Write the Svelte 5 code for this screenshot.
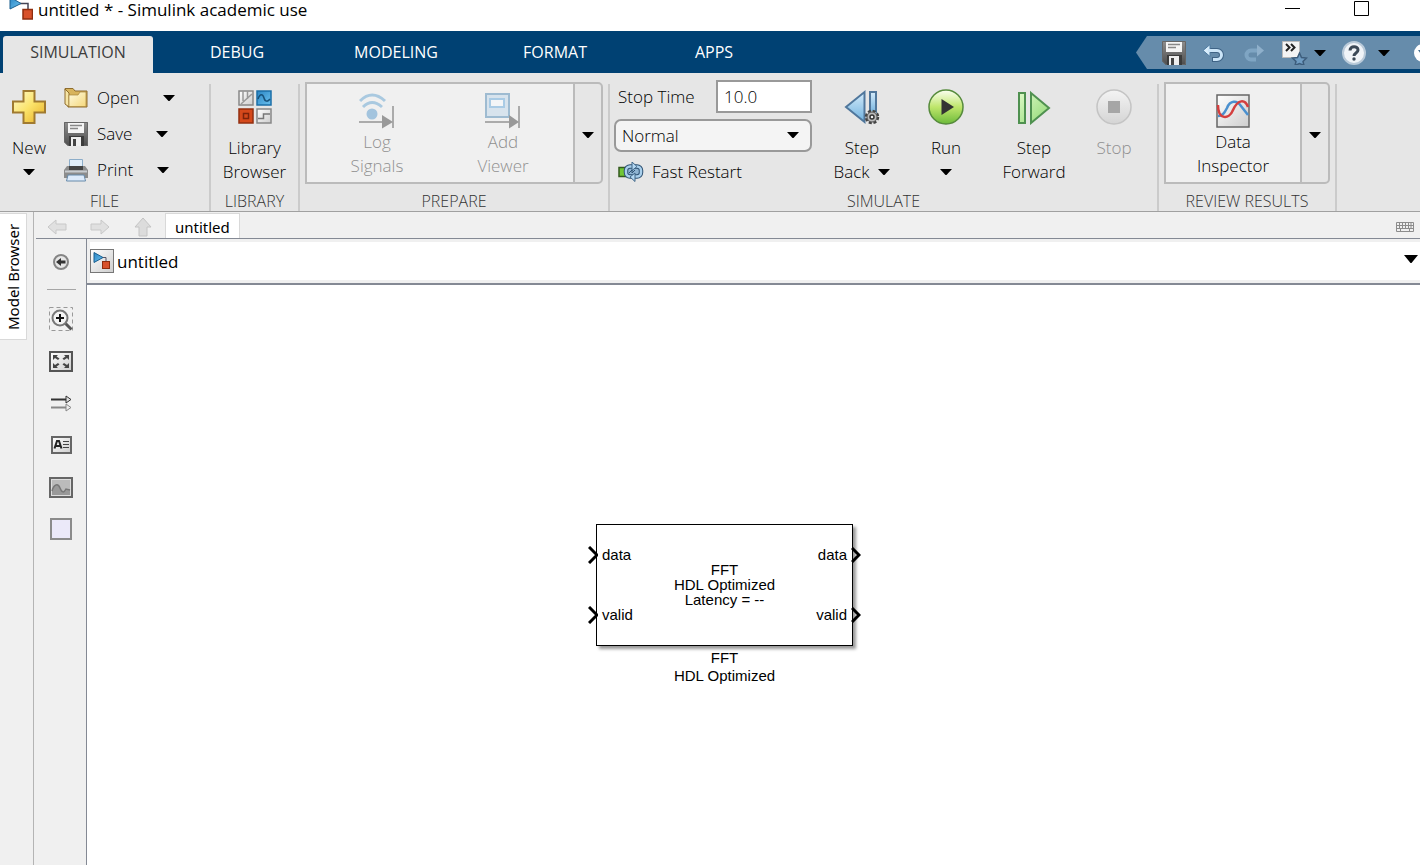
<script lang="ts">
	const tabs = ['SIMULATION', 'DEBUG', 'MODELING', 'FORMAT', 'APPS'];

	const fileActions = [
		{ id: 'open', label: 'Open' },
		{ id: 'save', label: 'Save' },
		{ id: 'print', label: 'Print' }
	];

	const paletteTools = [
		{ id: 'zoom', label: 'Zoom' },
		{ id: 'fit', label: 'Fit to View' },
		{ id: 'signals', label: 'Toggle Sample Time' },
		{ id: 'annotation', label: 'Annotation' },
		{ id: 'image', label: 'Image' },
		{ id: 'area', label: 'Area' }
	];

	const ports = ['data', 'valid'];

	let activeTab = $state('SIMULATION');
	let stopTime = $state('10.0');
	let simMode = $state('Normal');
</script>

{#snippet caret()}
	<svg class="caret" width="12" height="6" viewBox="0 0 12 6" aria-hidden="true">
		<path d="M0 0h12L6.5 6h-1z" fill="#000" />
	</svg>
{/snippet}

{#snippet floppy()}
	<svg width="24" height="24" viewBox="0 0 24 24" aria-hidden="true">
		<path d="M0 0h24v24H4l-4-4z" fill="url(#steel)" />
		<path d="M.5.5h23v23H4L.5 20z" fill="none" stroke="#666" />
		<rect x="4" y="1" width="16" height="10" fill="#f5f5f5" />
		<path d="M6 3.500h12M6 6.500h8" stroke="#888" stroke-width="1.500" />
		<path d="M5 14h15v10H5z" fill="#3b3b3b" />
		<path d="M7 15h10v9H7z" fill="#eee" />
		<path d="M9 17h3v7H9z" fill="#444" />
	</svg>
{/snippet}

{#snippet modelGlyph()}
	<path d="M11 7.500h8v6" fill="none" stroke="#445" stroke-width="1.500" />
	<path d="M1 1l11 6.500L1 13z" fill="url(#blue)" stroke="#1a5f8f" />
	<rect x="14" y="13.500" width="9.500" height="9.500" fill="#d8512a" stroke="#8e2d0e" stroke-width="1.500" />
{/snippet}

{#snippet fileIcon(id: string)}
	{#if id === 'open'}
		<svg width="24" height="24" viewBox="0 0 24 24" aria-hidden="true">
			<path d="M1 2.500h8l2 2.500h12v16H4z" fill="#d8b45c" stroke="#8f6d2e" />
			<path d="M1 3l4 4v14l-4-3z" fill="#f6e5a5" stroke="#8f6d2e" />
			<path d="M5 9h9l2-3h6v14.500H5z" fill="url(#folder)" stroke="#a8843a" stroke-width=".7" />
		</svg>
	{:else if id === 'save'}
		{@render floppy()}
	{:else}
		<svg width="24" height="24" viewBox="0 0 24 24" aria-hidden="true">
			<path d="M5.500 1.500h13v9h-13z" fill="#e1edf8" stroke="#8cadc9" />
			<path d="M3 8h18l3 4v8H0v-8z" fill="#8c8c8c" />
			<path d="M5 8h14v4H5z" fill="#444" />
			<path d="M1 13.500h22" stroke="#c8ccd0" stroke-width="2" />
			<path d="M4 17h16l1.500 6h-19z" fill="#dceafa" stroke="#678aaa" />
		</svg>
	{/if}
{/snippet}

{#snippet paletteIcon(id: string)}
	<svg width="24" height="24" viewBox="0 0 24 24" fill="none" aria-hidden="true">
		{#if id === 'zoom'}
			<rect x=".5" y=".5" width="23" height="23" stroke="#999" stroke-dasharray="4 3" />
			<path d="M16 16l6.500 6.500" stroke="#555" stroke-width="3" />
			<circle cx="11" cy="11" r="7.500" fill="#f3f3f3" stroke="#777" stroke-width="2" />
			<path d="M7 11h8M11 7v8" stroke="#111" stroke-width="2" />
		{:else if id === 'fit'}
			<rect x="1" y="3" width="22" height="19" fill="url(#pale)" stroke="#555" stroke-width="2" />
			<path d="M4 6h5L7.500 7.500l3 2-1.500 1.500-3-2L4 11zM20 6v5l-2-2-3 2-1.500-1.500 3-2L15 6zM4 19v-5l2 2 3-2 1.500 1.500-3 2L9 19zM20 19h-5l1.500-1.500-3-2L15 14l3 2 2-2z" fill="#444" />
		{:else if id === 'signals'}
			<path d="M2 8.500h16" stroke="#333" stroke-width="2" />
			<path d="M17 5l5 3.500-5 3.500z" fill="#ddd" stroke="#333" />
			<path d="M2 16.500h16" stroke="#888" stroke-width="2" />
			<path d="M17 13l5 3.500-5 3.500z" fill="#eee" stroke="#888" />
		{:else if id === 'annotation'}
			<rect x="3" y="4" width="19" height="16" fill="url(#pale)" stroke="#666" stroke-width="2" />
			<path d="M5.500 15.500L8 8h2l2.500 7.500M7 13h4" stroke="#222" stroke-width="2" />
			<path d="M14 8.500h6M14 11.500h6M14 14.500h6" stroke="#444" />
		{:else if id === 'image'}
			<rect x="1" y="3" width="22" height="19" fill="#ddd" stroke="#666" stroke-width="2" />
			<rect x="3" y="5" width="18" height="15" fill="#bbb" />
			<path d="M3 16c2-7 6-8 8-3 2 5 4 5 6 1l4 1v5H3z" fill="#999" />
			<path d="M3 16c2-7 6-8 8-3 2 5 4 5 6 1l4 1" stroke="#777" stroke-width="1.500" />
		{:else}
			<rect x="2" y="2" width="20" height="20" fill="#ebe9f9" stroke="#8b8b8b" stroke-width="2" />
		{/if}
	</svg>
{/snippet}

<!-- gradients shared by all icons -->
<svg class="defs" width="0" height="0" aria-hidden="true">
	<defs>
		<linearGradient id="steel" x1="0" y1="0" x2="0" y2="1">
			<stop offset="0" stop-color="#8f8f8f" />
			<stop offset="1" stop-color="#4d4d4d" />
		</linearGradient>
		<linearGradient id="gold" x1="0" y1="0" x2="1" y2="1">
			<stop offset="0" stop-color="#fffbd0" />
			<stop offset=".5" stop-color="#fbe36a" />
			<stop offset="1" stop-color="#e6ab22" />
		</linearGradient>
		<linearGradient id="folder" x1="0" y1="0" x2="1" y2="1">
			<stop offset="0" stop-color="#fffbe0" />
			<stop offset="1" stop-color="#f5d87c" />
		</linearGradient>
		<linearGradient id="blue" x1="0" y1="0" x2="1" y2="1">
			<stop offset="0" stop-color="#2b86c4" />
			<stop offset="1" stop-color="#6bc1ef" />
		</linearGradient>
		<linearGradient id="sky" x1="0" y1="0" x2="0" y2="1">
			<stop offset="0" stop-color="#d4ebfb" />
			<stop offset="1" stop-color="#6fb1de" />
		</linearGradient>
		<linearGradient id="lime" x1="0" y1="0" x2="0" y2="1">
			<stop offset="0" stop-color="#fbfff2" />
			<stop offset=".5" stop-color="#bfe66b" />
			<stop offset="1" stop-color="#6cba3a" />
		</linearGradient>
		<linearGradient id="mint" x1="0" y1="0" x2="1" y2="1">
			<stop offset="0" stop-color="#dcf9c6" />
			<stop offset="1" stop-color="#8fd873" />
		</linearGradient>
		<linearGradient id="pale" x1="0" y1="0" x2="1" y2="1">
			<stop offset="0" stop-color="#fff" />
			<stop offset="1" stop-color="#cdcdcd" />
		</linearGradient>
		<linearGradient id="silver" x1="0" y1="0" x2="0" y2="1">
			<stop offset="0" stop-color="#f4f4f4" />
			<stop offset="1" stop-color="#d4d4d4" />
		</linearGradient>
	</defs>
</svg>

<div class="window">
	<header class="titlebar">
		<svg class="app-icon" width="24" height="24" viewBox="0 0 24 24" aria-hidden="true">
			{@render modelGlyph()}
		</svg>
		<span class="title">untitled * - Simulink academic use</span>
		<div class="window-buttons">
			<button aria-label="Minimize">
				<svg width="16" height="16" viewBox="0 0 16 16"><path d="M0 8.500h15" stroke="#000" /></svg>
			</button>
			<button aria-label="Maximize">
				<svg width="16" height="16" viewBox="0 0 16 16"><path d="M.5 1.500h14v14H.500z" fill="none" stroke="#000" /></svg>
			</button>
		</div>
	</header>

	<nav class="tabbar">
		<div class="tabs" role="tablist">
			{#each tabs as tab}
				<button
					class="tab"
					class:active={tab === activeTab}
					role="tab"
					aria-selected={tab === activeTab}
					onclick={() => (activeTab = tab)}>{tab}</button
				>
			{/each}
		</div>
		<div class="quick-access">
			<button aria-label="Save">{@render floppy()}</button>
			<button aria-label="Undo">
				<svg width="24" height="24" viewBox="0 0 24 24" fill="none">
					<path d="M7 9.500h8a4.500 4.500 0 0 1 0 9H10" stroke="#3f6385" stroke-width="5" />
					<path d="M1 9.500l7-6v12z" fill="#d8edfb" stroke="#4f7ba0" />
					<path d="M6 9.500h9a4.500 4.500 0 0 1 0 9H11" stroke="#cbe5f8" stroke-width="3" />
				</svg>
			</button>
			<button aria-label="Redo" disabled>
				<svg width="24" height="24" viewBox="0 0 24 24" fill="none">
					<path d="M16 9.500H9a4.500 4.500 0 0 0 0 9h5" stroke="#7fa5c3" stroke-width="4" />
					<path d="M22 9.500l-7-6v12z" fill="#8fb0cb" />
				</svg>
			</button>
			<button class="qa-menu" aria-label="Favorites">
				<svg width="26" height="24" viewBox="0 0 26 24" fill="none">
					<path d="M.5.500h17v16H.500z" fill="#f4f4f4" stroke="#bbb" />
					<path d="M4 3l3.500 3.500L4 10M9 3l3.500 3.500L9 10" stroke="#222" stroke-width="2" />
					<path d="M17.500 12l2 4.500 5 .5-3.500 3.500 1 4-4.500-2-4.500 2 1-4-3.500-3.500 5-.5z" fill="#6f9cc2" stroke="#3d5d7c" stroke-width="1.500" />
				</svg>
				{@render caret()}
			</button>
			<button class="qa-menu help" aria-label="Help">
				<svg width="24" height="24" viewBox="0 0 24 24" fill="none">
					<circle cx="12" cy="12" r="11" fill="#f0f4f8" stroke="#b9cad9" stroke-width="2" />
					<path d="M8 9.500c0-5 8-5 8-.5 0 3-4 3-4 6" stroke="#3c4957" stroke-width="3" />
					<circle cx="12" cy="18" r="1.700" fill="#3c4957" />
				</svg>
				{@render caret()}
			</button>
			<button class="qa-more" aria-label="More">
				<svg width="18" height="18" viewBox="0 0 18 18">
					<circle cx="9" cy="9" r="9" fill="#fff" />
					<path d="M4 6h10l-5 7z" fill="#47708f" />
				</svg>
			</button>
		</div>
	</nav>

	<section class="ribbon">
		<div class="group file">
			<div class="group-body">
				<button class="big">
					<span class="big-icon">
						<svg width="34" height="34" viewBox="0 0 34 34">
							<path d="M11.500 1h11v10.500H33v11H22.500V33h-11V22.500H1v-11h10.500z" fill="url(#gold)" stroke="#a07a30" stroke-width="2" />
						</svg>
					</span>
					<span>New</span>
					<span>{@render caret()}</span>
				</button>
				<div class="file-list">
					{#each fileActions as action}
						<button class="row">
							{@render fileIcon(action.id)}
							<span class="row-label">{action.label}</span>
							{@render caret()}
						</button>
					{/each}
				</div>
			</div>
			<h2>FILE</h2>
		</div>

		<div class="group library">
			<div class="group-body">
				<button class="big">
					<span class="big-icon">
						<svg width="34" height="34" viewBox="0 0 34 34" fill="none">
							<rect x="1" y="1" width="14" height="14" fill="url(#pale)" stroke="#888" stroke-width="1.500" />
							<path d="M5 1v10M9.500 1v8M3 14L14 4" stroke="#999" stroke-width="1.500" />
							<rect x="19" y="1" width="14" height="14" fill="url(#blue)" stroke="#1b6fa8" stroke-width="1.500" />
							<path d="M20 9c2-6 5-5 6-1s4 4 6 1" stroke="#17527b" stroke-width="1.500" />
							<rect x="1" y="19" width="14" height="14" fill="#d5491b" stroke="#922f10" stroke-width="1.500" />
							<rect x="5.500" y="23.500" width="5" height="5" stroke="#7c230a" stroke-width="1.500" />
							<rect x="19" y="19" width="14" height="14" fill="url(#pale)" stroke="#888" stroke-width="1.500" />
							<path d="M20 28.500h5.500V24H32" stroke="#777" stroke-width="1.500" />
						</svg>
					</span>
					<span>Library<br />Browser</span>
				</button>
			</div>
			<h2>LIBRARY</h2>
		</div>

		<div class="group prepare">
			<div class="group-body">
				<div class="gallery">
					<div class="gallery-items">
						<button class="big" disabled>
							<span class="big-icon">
								<svg width="36" height="36" viewBox="0 0 36 36" fill="none">
									<path d="M1 8q12-12 25 0M4 14q9-9 19 0" stroke="#a9c9e0" stroke-width="3" />
									<circle cx="13" cy="21" r="5.500" fill="#a3c4de" />
									<path d="M0 29h25M34 13v22" stroke="#ababab" stroke-width="2" />
									<path d="M23 22l11 7-11 6.500z" fill="#999" />
								</svg>
							</span>
							<span>Log<br />Signals</span>
						</button>
						<button class="big" disabled>
							<span class="big-icon">
								<svg width="36" height="36" viewBox="0 0 36 36" fill="none">
									<rect x="1" y="1" width="23" height="23" fill="#d7e3ed" stroke="#9ebbd1" stroke-width="2" />
									<rect x="5" y="6" width="14" height="8" fill="#f3f5f7" stroke="#a9cbe5" stroke-width="2" />
									<path d="M0 29h25M34 13v22" stroke="#ababab" stroke-width="2" />
									<path d="M24 22l10 7-10 6.500z" fill="#999" />
								</svg>
							</span>
							<span>Add<br />Viewer</span>
						</button>
					</div>
					<button class="gallery-more" aria-label="More prepare tools">{@render caret()}</button>
				</div>
			</div>
			<h2>PREPARE</h2>
		</div>

		<div class="group simulate">
			<div class="group-body">
				<div class="sim-settings">
					<div class="stop-time">
						<label for="stop-time">Stop Time</label>
						<input id="stop-time" type="text" bind:value={stopTime} />
					</div>
					<div class="mode">
						<select aria-label="Simulation mode" bind:value={simMode}>
							<option>Normal</option>
							<option>Accelerator</option>
							<option>Rapid Accelerator</option>
						</select>
						{@render caret()}
					</div>
					<button class="fast-restart">
						<svg width="26" height="20" viewBox="0 0 26 20" fill="none">
							<path d="M1 5.500h8v9H1z" fill="#72c735" stroke="#33591f" stroke-width="1.500" />
							<rect x="8" y="4.500" width="15" height="10" rx="4" fill="#8fb4d2" stroke="#2f5273" stroke-width="4.500" />
							<rect x="8" y="4.500" width="15" height="10" rx="4" stroke="#a9cfeb" stroke-width="2.500" />
							<path d="M14 0l5 4.500-5 4zM17 11l-5 4 5 4.500z" fill="#b4d8f2" stroke="#416788" />
							<path d="M11 11l3-3v3l3-3" stroke="#2f5273" />
						</svg>
						Fast Restart
					</button>
				</div>
				<div class="run-tools">
					<button class="big">
						<span class="big-icon">
							<svg width="36" height="36" viewBox="0 0 36 36">
								<path d="M20.500 3v30L2 18z" fill="url(#sky)" stroke="#50779c" stroke-width="2" />
								<path d="M26 3h6v22h-6z" fill="url(#sky)" stroke="#50779c" stroke-width="2" />
								<circle cx="28" cy="28" r="6" fill="#ccc" stroke="#444" stroke-width="2.500" stroke-dasharray="3 1.700" />
								<circle cx="28" cy="28" r="5" fill="#bbb" stroke="#555" />
								<circle cx="28" cy="28" r="2" fill="#eee" stroke="#333" stroke-width="1.500" />
							</svg>
						</span>
						<span>Step<br />Back&nbsp;&nbsp;{@render caret()}</span>
					</button>
					<button class="big">
						<span class="big-icon">
							<svg width="36" height="36" viewBox="0 0 36 36">
								<circle cx="18" cy="18" r="17" fill="url(#lime)" stroke="#568b3c" stroke-width="1.500" />
								<path d="M13.500 10L26 18l-12.500 8z" fill="#333" />
							</svg>
						</span>
						<span>Run</span>
						<span>{@render caret()}</span>
					</button>
					<button class="big wide">
						<span class="big-icon">
							<svg width="36" height="36" viewBox="0 0 36 36">
								<path d="M3 4h6v30H3zM15 4l18 15-18 15z" fill="url(#mint)" stroke="#4f9150" stroke-width="2" />
							</svg>
						</span>
						<span>Step<br />Forward</span>
					</button>
					<button class="big narrow" disabled>
						<span class="big-icon">
							<svg width="36" height="36" viewBox="0 0 36 36">
								<circle cx="18" cy="18" r="17" fill="url(#silver)" stroke="#c4c4c4" stroke-width="1.500" />
								<path d="M12 12h12v12H12z" fill="#a6a6a6" />
							</svg>
						</span>
						<span>Stop</span>
					</button>
				</div>
			</div>
			<h2>SIMULATE</h2>
		</div>

		<div class="group review">
			<div class="group-body">
				<div class="gallery">
					<div class="gallery-items">
						<button class="big">
							<span class="big-icon">
								<svg width="34" height="34" viewBox="0 0 34 34" fill="none">
									<rect x="1" y="1" width="32" height="32" fill="url(#pale)" stroke="#666" stroke-width="1.500" />
									<path d="M2 22c4 0 6-2 9-8 3-8 10-8 14-2l7 9" stroke="#4a90cf" stroke-width="2.500" />
									<path d="M2 11c0 15 11 15 15 5 5-11 12-11 15-3" stroke="#d43f3f" stroke-width="2.500" />
								</svg>
							</span>
							<span>Data<br />Inspector</span>
						</button>
					</div>
					<button class="gallery-more" aria-label="More review tools">{@render caret()}</button>
				</div>
			</div>
			<h2>REVIEW RESULTS</h2>
		</div>
	</section>

	<div class="workspace">
		<aside class="dock">
			<button class="dock-tab">Model Browser</button>
		</aside>

		<div class="editor">
			<div class="docbar">
				<div class="history">
					<button aria-label="Back" disabled>
						<svg width="20" height="20" viewBox="0 0 20 20"><path d="M1 10l8-7v4h10v6H9v4z" fill="#e0e0e0" stroke="#c8c8c8" /></svg>
					</button>
					<button aria-label="Forward" disabled>
						<svg width="20" height="20" viewBox="0 0 20 20"><path d="M19 10l-8-7v4H1v6h10v4z" fill="#e0e0e0" stroke="#c8c8c8" /></svg>
					</button>
					<button aria-label="Up to parent" disabled>
						<svg width="20" height="20" viewBox="0 0 20 20"><path d="M10 1l8 9h-4v9H6v-9H2z" fill="#dcdcdc" stroke="#c4c4c4" /></svg>
					</button>
				</div>
				<button class="doc-tab">untitled</button>
				<button class="keyboard" aria-label="Keyboard shortcuts">
					<svg width="18" height="10" viewBox="0 0 18 10" fill="none">
						<path d="M.5.500h17v9H.500zM1 3.500h16M1 6.500h16M3.500 1v5M6.500 1v5M9.500 1v5M12.500 1v5M15 1v5M4.500 7v2M13.500 7v2" stroke="#8c8c8c" />
					</svg>
				</button>
			</div>

			<div class="editor-body">
				<div class="palette">
					<button aria-label="Hide browser">
						<svg width="16" height="16" viewBox="0 0 16 16">
							<circle cx="8" cy="8" r="7" fill="#e6e6e6" stroke="#858585" stroke-width="2" />
							<path d="M3 8l5-4v2.500h4.500v3H8V12z" fill="#333" />
						</svg>
					</button>
					<hr />
					{#each paletteTools as tool}
						<button aria-label={tool.label}>{@render paletteIcon(tool.id)}</button>
					{/each}
				</div>

				<div class="main">
					<div class="address">
						<svg width="24" height="24" viewBox="0 0 24 24" aria-hidden="true">
							<rect x=".5" y=".5" width="23" height="23" fill="url(#pale)" stroke="#777" />
							<path d="M12 8.500h4v4" fill="none" stroke="#556" />
							<path d="M4 3.500l9 5-9 5z" fill="url(#blue)" stroke="#1a5f8f" />
							<rect x="12.500" y="12.500" width="7" height="7" fill="#d8512a" stroke="#8e2d0e" />
						</svg>
						<span class="path">untitled</span>
						<button aria-label="Path history">
							<svg width="14" height="8" viewBox="0 0 14 8"><path d="M0 0h14L7.500 8h-1z" fill="#000" /></svg>
						</button>
					</div>

					<div class="canvas">
						<figure class="block">
							<div class="block-box">
								{#each ports as port}
									<div class="port-row">
										<span class="port">
											<svg width="10" height="18" viewBox="0 0 10 18"><path d="M1 1l8 8-8 8" fill="none" stroke="#000" stroke-width="3" /></svg>
											{port}
										</span>
										<span class="port">
											{port}
											<svg width="10" height="18" viewBox="0 0 10 18"><path d="M1 2l7 7-7 7" fill="none" stroke="#000" stroke-width="3" /></svg>
										</span>
									</div>
								{/each}
								<div class="block-text">FFT<br />HDL Optimized<br />Latency = --</div>
							</div>
							<figcaption>FFT<br />HDL Optimized</figcaption>
						</figure>
					</div>
				</div>
			</div>
		</div>
	</div>
</div>

<style>
	:global(body) {
		background: #fff;
	}

	.window {
		display: flex;
		flex-direction: column;
		min-height: 100vh;
		overflow: hidden;
		font-family: 'Open Sans', 'Noto Sans', sans-serif;
		font-size: 17px;
		line-height: 24px;
		color: #000;
	}

	.defs {
		position: absolute;
	}

	svg {
		flex: none;
	}

	button {
		display: flex;
		align-items: center;
		padding: 0;
		border: 0;
		background: none;
		font: inherit;
		color: inherit;
	}

	/* Title bar */
	.titlebar {
		display: flex;
		height: 31px;
		padding: 0 50px 0 9px;
	}

	.app-icon {
		margin: -4px 5px 0 0;
	}

	.title {
		line-height: 20px;
	}

	.window-buttons {
		display: flex;
		align-items: flex-start;
		gap: 53px;
		margin-left: auto;
	}

	/* Tab bar */
	.tabbar {
		display: flex;
		justify-content: space-between;
		height: 42px;
		background: #004173;
	}

	.tabs {
		display: flex;
		padding: 5px 0 0 3px;
		gap: 9px;
	}

	.tab {
		justify-content: center;
		width: 150px;
		padding-bottom: 6px;
		border-radius: 3px 3px 0 0;
		font-size: 16px;
		color: #fff;
	}

	.tab.active {
		background: #e6e6e6;
		color: #3c3c3c;
	}

	.quick-access {
		display: flex;
		align-items: center;
		gap: 16px;
		height: 33px;
		margin-top: 5px;
		padding-left: 26px;
		overflow: hidden;
		background: #668cab;
		clip-path: polygon(0 50%, 11px 0, 100% 0, 100% 100%, 11px 100%);
	}

	.qa-menu {
		gap: 6px;
	}

	.qa-menu.help {
		gap: 12px;
	}

	.qa-more {
		margin: 0 -12px 0 8px;
	}

	/* Ribbon */
	.ribbon {
		display: flex;
		height: 138px;
		background: #e6e6e6;
		border-bottom: 1px solid #a0a0a0;
		font-weight: 300;
	}

	.group {
		display: flex;
		flex-direction: column;
		justify-content: space-between;
		box-sizing: border-box;
		border-right: 2px solid #cbcbcb;
		border-image: linear-gradient(transparent 12px, #cbcbcb 12px) 1;
	}

	.group-body {
		display: flex;
		padding: 9px 5px 0;
	}

	h2 {
		margin: 0;
		font-size: 16px;
		font-weight: 300;
		line-height: 20px;
		text-align: center;
		color: #333;
	}

	.file {
		width: 211px;
	}

	.library {
		width: 89px;
	}

	.prepare {
		width: 310px;
	}

	.simulate {
		width: 549px;
	}

	.review {
		width: 178px;
	}

	.big {
		flex-direction: column;
		padding-top: 6px;
		text-align: center;
	}

	.big-icon {
		display: flex;
		align-items: center;
		height: 38px;
		margin-bottom: 10px;
	}

	.big .caret {
		vertical-align: 3px;
	}

	button:disabled {
		color: #909090;
	}

	.file .big {
		width: 48px;
	}

	.file-list {
		display: flex;
		flex-direction: column;
		margin-top: -2px;
		padding-left: 11px;
	}

	.row {
		height: 36px;
	}

	.row-label {
		padding: 0 24px 0 9px;
	}

	.library .big {
		width: 100%;
	}

	.gallery {
		display: flex;
		flex: 1;
		height: 98px;
		border: 2px solid #bbb;
		border-radius: 0 5px 5px 0;
	}

	.gallery-items {
		display: flex;
		flex: 1;
		justify-content: center;
		background: #f0f0f0;
	}

	.gallery .big {
		width: 126px;
		padding-top: 8px;
	}

	.gallery .big-icon {
		margin-bottom: 0;
	}

	.gallery-more {
		justify-content: center;
		width: 28px;
		padding-top: 3px;
		border-left: 2px solid #bbb;
	}

	.simulate .group-body {
		padding-left: 4px;
	}

	.sim-settings {
		display: flex;
		flex-direction: column;
		width: 198px;
		gap: 6px;
		margin-top: -2px;
	}

	.stop-time {
		display: flex;
		align-items: center;
		justify-content: space-between;
		padding-left: 4px;
	}

	input,
	select {
		box-sizing: border-box;
		height: 33px;
		border: 2px solid #999;
		font: inherit;
		color: #000;
	}

	input {
		width: 96px;
		padding: 0 6px;
		background: #fff;
	}

	.mode {
		position: relative;
		display: flex;
	}

	select {
		width: 100%;
		padding: 0 6px;
		appearance: none;
		border-radius: 7px;
		background: #f4f4f4;
	}

	.mode .caret {
		position: absolute;
		right: 13px;
		top: 13px;
		pointer-events: none;
	}

	.fast-restart {
		gap: 8px;
		height: 28px;
		padding-left: 4px;
	}

	.run-tools {
		display: flex;
		gap: 12px;
		padding-left: 14px;
	}

	.run-tools .big {
		width: 72px;
	}

	.run-tools .wide {
		width: 80px;
	}

	.run-tools .narrow {
		width: 56px;
	}

	/* Workspace */
	.workspace {
		display: flex;
		flex: 1;
		background: #f0f0f0;
	}

	.dock {
		width: 33px;
		border-right: 1px solid #b4b4b4;
	}

	.dock-tab {
		width: 27px;
		height: 127px;
		margin-top: 1px;
		justify-content: center;
		border: 1px solid #d9d9d9;
		border-width: 1px 0 1px 1px;
		background: #fff;
		font-family: 'Noto Sans', sans-serif;
		font-size: 15px;
		writing-mode: vertical-rl;
		transform: rotate(180deg);
	}

	.editor {
		display: flex;
		flex: 1;
		flex-direction: column;
		min-width: 0;
	}

	.docbar {
		display: flex;
		align-items: center;
		height: 26px;
		margin-left: 2px;
		border-bottom: 1px solid #848994;
	}

	.history {
		display: flex;
		gap: 23px;
		padding: 4px 12px 0 11px;
	}

	.doc-tab {
		align-self: flex-end;
		height: 25px;
		padding: 2px 9px 0;
		border: 1px solid #d9d9d9;
		border-bottom: 0;
		background: #fff;
		font-family: 'Noto Sans', sans-serif;
		font-size: 15px;
	}

	.keyboard {
		margin: 3px 6px 0 auto;
	}

	.editor-body {
		display: flex;
		flex: 1;
	}

	.palette {
		display: flex;
		flex-direction: column;
		align-items: center;
		gap: 18px;
		width: 53px;
		border-right: 1px solid #848994;
		box-sizing: border-box;
		padding: 15px 0 0 2px;
	}

	.palette hr {
		width: 29px;
		margin: 1px 0 -1px;
		border: 0;
		border-top: 1px solid #a6a6a6;
	}

	.main {
		display: flex;
		flex: 1;
		flex-direction: column;
		background: #fff;
	}

	.address {
		display: flex;
		align-items: center;
		height: 38px;
		padding-right: 2px;
		border: 3px solid #f0f0f0;
		border-right: 0;
	}

	.path {
		padding: 1px 0 0 3px;
	}

	.address button {
		margin: 0 0 5px auto;
	}

	.canvas {
		position: relative;
		flex: 1;
		border-top: 2px solid #848994;
	}

	.block {
		position: absolute;
		left: 509px;
		top: 239px;
		width: 257px;
		margin: 0;
		font-family: 'Liberation Sans', Arial, sans-serif;
		font-size: 15px;
		text-align: center;
	}

	.block-box {
		position: relative;
		display: flex;
		flex-direction: column;
		box-sizing: border-box;
		height: 122px;
		border: 1px solid #000;
		box-shadow: 3px 3px 3px #999;
		background: #fff;
	}

	.port-row {
		display: flex;
		flex: 1;
		align-items: center;
		justify-content: space-between;
		margin: 0 -9px;
	}

	.port {
		display: flex;
		align-items: center;
		gap: 4px;
	}

	.block-text {
		position: absolute;
		inset: 0;
		padding-top: 37px;
		line-height: 15px;
	}

	figcaption {
		padding-top: 3px;
		line-height: 18px;
	}
</style>
